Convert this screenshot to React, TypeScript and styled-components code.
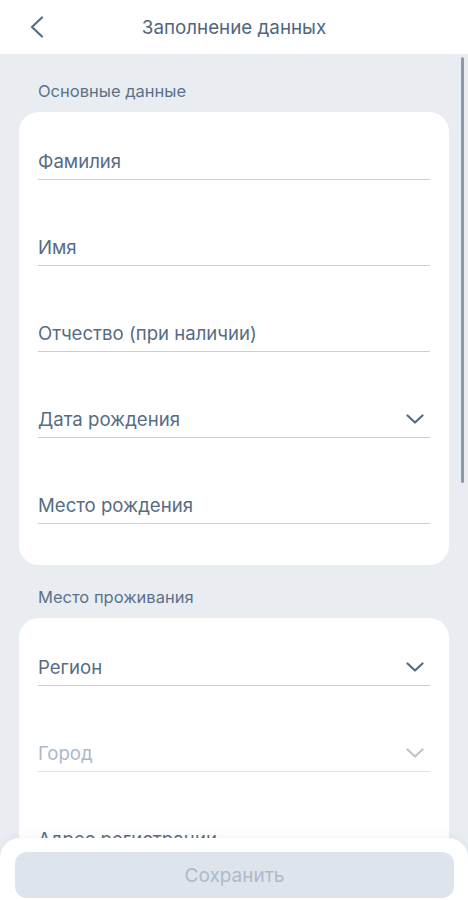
import React from "react";
import styled, { createGlobalStyle } from "styled-components";

const GlobalStyle = createGlobalStyle`
  html, body {
    margin: 0;
    padding: 0;
    background: #e9edf2;
    font-family: Inter, "Open Sans", "Liberation Sans", sans-serif;
    -webkit-font-smoothing: antialiased;
  }
  * { box-sizing: border-box; }
`;

const Page = styled.div`
  min-height: 100vh;
  background: #e9edf2;
  padding-bottom: 120px;
`;

const Header = styled.header`
  height: 54px;
  background: #ffffff;
  display: grid;
  grid-template-columns: 60px 1fr 60px;
  align-items: center;
`;

const BackButton = styled.button`
  border: 0;
  background: none;
  padding: 0 0 0 30px;
  height: 54px;
  display: flex;
  align-items: center;
  cursor: pointer;
`;

const Title = styled.h1`
  margin: 0;
  text-align: center;
  font-size: 18.8px;
  font-weight: 400;
  color: #4f6680;
`;

const Content = styled.main`
  padding: 27px 19px 0;
  display: flex;
  flex-direction: column;
`;

const SectionLabel = styled.h2<{ $first?: boolean }>`
  margin: ${(p) => (p.$first ? "0" : "22px")} 0 11px 19px;
  font-size: 16.5px;
  line-height: 20px;
  font-weight: 400;
  color: #5c7189;
`;

const Card = styled.section`
  background: #ffffff;
  border-radius: 20px;
  padding: 37px 19px 41px;
  display: flex;
  flex-direction: column;
  gap: 55px;
`;

const Field = styled.div<{ $disabled?: boolean }>`
  display: flex;
  align-items: center;
  justify-content: space-between;
  height: 31px;
  padding-bottom: 6px;
  border-bottom: 1px solid ${(p) => (p.$disabled ? "#dde3ea" : "#c6d0db")};
`;

const FieldText = styled.span<{ $disabled?: boolean }>`
  font-size: 18.6px;
  line-height: 24px;
  color: ${(p) => (p.$disabled ? "#abb9c7" : "#566c84")};
`;

const Chevron = styled.svg`
  width: 18px;
  height: 10px;
  margin-right: 6px;
  flex: none;
`;

const BottomSheet = styled.div`
  position: fixed;
  left: 0;
  right: 0;
  bottom: 0;
  height: 62px;
  background: #ffffff;
  border-radius: 20px 20px 0 0;
  padding: 14px 14px 0 15px;
  box-shadow: 0 -2px 8px rgba(80, 100, 130, 0.06);
`;

const SaveButton = styled.button`
  width: 100%;
  height: 46px;
  border: 0;
  border-radius: 12px;
  background: #dee4eb;
  color: #aebac7;
  font-family: inherit;
  font-size: 19px;
  padding-top: 2px;
  cursor: default;
`;

const ScrollThumb = styled.div`
  position: fixed;
  right: 4px;
  top: 57px;
  width: 3px;
  height: 426px;
  border-radius: 2px;
  background: #8d99a8;
`;

const DownIcon = ({ disabled }: { disabled?: boolean }) => (
  <Chevron viewBox="0 0 18 10" fill="none">
    <polyline
      points="1.5,1.5 9,8.5 16.5,1.5"
      stroke={disabled ? "#b9c5d1" : "#566c84"}
      strokeWidth="2.2"
      strokeLinecap="round"
      strokeLinejoin="round"
    />
  </Chevron>
);

type FieldDef = { label: string; select?: boolean; disabled?: boolean };

const basic: FieldDef[] = [
  { label: "Фамилия" },
  { label: "Имя" },
  { label: "Отчество (при наличии)" },
  { label: "Дата рождения", select: true },
  { label: "Место рождения" },
];

const living: FieldDef[] = [
  { label: "Регион", select: true },
  { label: "Город", select: true, disabled: true },
  { label: "Адрес регистрации" },
  { label: "Почтовый индекс" },
];

const FormField = ({ label, select, disabled }: FieldDef) => (
  <Field $disabled={disabled}>
    <FieldText $disabled={disabled}>{label}</FieldText>
    {select && <DownIcon disabled={disabled} />}
  </Field>
);

export default function App() {
  return (
    <Page>
      <GlobalStyle />
      <Header>
        <BackButton aria-label="Назад">
          <svg width="14" height="22" viewBox="0 0 14 22" fill="none">
            <polyline
              points="12,1.5 2,11 12,20.5"
              stroke="#566c84"
              strokeWidth="2.2"
              strokeLinecap="round"
              strokeLinejoin="round"
            />
          </svg>
        </BackButton>
        <Title>Заполнение данных</Title>
        <span />
      </Header>
      <Content>
        <SectionLabel $first>Основные данные</SectionLabel>
        <Card>
          {basic.map((f) => (
            <FormField key={f.label} {...f} />
          ))}
        </Card>
        <SectionLabel>Место проживания</SectionLabel>
        <Card>
          {living.map((f) => (
            <FormField key={f.label} {...f} />
          ))}
        </Card>
      </Content>
      <ScrollThumb />
      <BottomSheet>
        <SaveButton disabled>Сохранить</SaveButton>
      </BottomSheet>
    </Page>
  );
}
